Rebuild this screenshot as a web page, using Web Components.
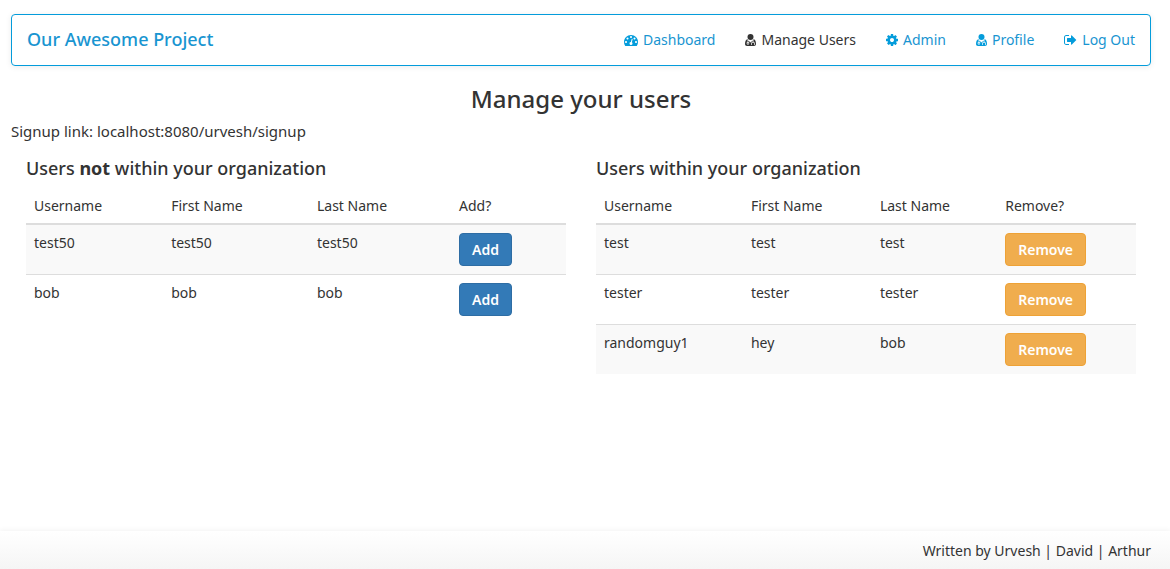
<!DOCTYPE html>
<html lang="en">
<head>
<meta charset="utf-8">
<meta name="viewport" content="width=device-width, initial-scale=1">
<title>Manage your users</title>
<style>
  body { margin: 0; font: 14px/20px "Noto Sans", "Open Sans", sans-serif; color: #333; background: #fff; }
</style>
</head>
<body>
<app-page>
  <nav-bar slot="header" brand="Our Awesome Project">
    <nav-item icon="dashboard" label="Dashboard"></nav-item>
    <nav-item icon="user" label="Manage Users" current></nav-item>
    <nav-item icon="cog" label="Admin"></nav-item>
    <nav-item icon="user" label="Profile"></nav-item>
    <nav-item icon="signout" label="Log Out"></nav-item>
  </nav-bar>
  <span slot="title">Manage your users</span>
  <span slot="signup">Signup link: localhost:8080/urvesh/signup</span>
  <user-table kind="add"><span>Users <b>not</b> within your organization</span></user-table>
  <user-table kind="remove"><span>Users within your organization</span></user-table>
  <page-footer slot="footer">Written by Urvesh | David | Arthur</page-footer>
</app-page>

<script>
const ICONS = {
  dashboard: [14, '0 0 1792 1792', '<path d="M384 1152q0-53-37.500-90.500t-90.500-37.500-90.500 37.500-37.500 90.500 37.500 90.500 90.500 37.500 90.500-37.500 37.500-90.500zm192-448q0-53-37.500-90.500t-90.500-37.500-90.500 37.500-37.500 90.500 37.500 90.500 90.500 37.500 90.500-37.500 37.500-90.500zm428 481l101-382q6-26-7.500-48.500t-38.500-29.500-48 6.500-30 39.500l-101 382q-60 5-107 43.500t-63 98.500q-20 77 20 146t117 89 146-20 89-117q16-60-6-117t-72-91zm660-33q0-53-37.500-90.500t-90.500-37.500-90.500 37.500-37.500 90.500 37.500 90.500 90.500 37.500 90.500-37.500 37.500-90.500zm-640-640q0-53-37.500-90.500t-90.500-37.500-90.500 37.500-37.500 90.500 37.500 90.500 90.500 37.500 90.500-37.500 37.500-90.500zm448 192q0-53-37.500-90.500t-90.500-37.500-90.500 37.500-37.500 90.500 37.500 90.500 90.500 37.500 90.500-37.500 37.500-90.500zm320 448q0 261-141 483-19 29-54 29h-1402q-35 0-54-29-141-221-141-483 0-182 71-348t191-286 286-191 348-71 348 71 286 191 191 286 71 348z"/>'],
  cog: [12, '128 0 1536 1792', '<path d="M1152 896q0-106-75-181t-181-75-181 75-75 181 75 181 181 75 181-75 75-181zm512-109v222q0 12-8 23t-20 13l-185 28q-19 54-39 91 35 50 107 138 10 12 10 25t-9 23q-27 37-99 108t-94 71q-12 0-26-9l-138-108q-44 23-91 38-16 136-29 186-7 28-36 28h-222q-14 0-24.500-8.500t-11.500-21.500l-28-184q-49-16-90-37l-141 107q-10 9-25 9-14 0-25-11-126-114-165-168-7-10-7-23 0-12 8-23 15-21 51-66.500t54-70.500q-27-50-41-99l-183-27q-13-2-21-12.500t-8-23.500v-222q0-12 8-23t19-13l186-28q14-46 39-92-40-57-107-138-10-12-10-24 0-10 9-23 26-36 98.500-107.500t94.500-71.500q13 0 26 10l138 107q44-23 91-38 16-136 29-186 7-28 36-28h222q14 0 24.500 8.500t11.500 21.500l28 184q49 16 90 37l142-107q9-9 24-9 13 0 25 10 129 119 165 170 7 8 7 22 0 12-8 23-15 21-51 66.500t-54 70.500q26 50 41 98l183 28q13 2 21 12.500t8 23.500z"/>'],
  signout: [13, '64 0 1664 1792', '<path d="M704 1440q0 4 1 20t.5 26.500-3 23.500-10 19.500-20.500 6.500h-320q-119 0-203.500-84.500t-84.500-203.500v-704q0-119 84.500-203.500t203.500-84.500h320q13 0 22.500 9.500t9.500 22.500q0 4 1 20t.5 26.500-3 23.500-10 19.500-20.500 6.500h-320q-66 0-113 47t-47 113v704q0 66 47 113t113 47h312l11.500 1 11.500 3 8 5.500 7 9 2 13.500zm928-544q0 26-19 45l-544 544q-19 19-45 19t-45-19-19-45v-288h-448q-26 0-45-19t-19-45v-384q0-26 19-45t45-19h448v-288q0-26 19-45t45-19 45 19l544 544q19 19 19 45z"/>'],
  user: [11, '0 0 11 14', '<circle cx="5.500" cy="4" r="3"/><path fill-rule="evenodd" d="M3 6.200 2.600 7v2.100a1.300 1.300 0 1 0 .7 0V7.600L5.500 9.500l2.200-1.900v1.200a1.700 1.700 0 0 0-1.500 1.700V12h.7v-1.500a1.100 1.100 0 0 1 2.200 0V12h.7v-1.500a1.700 1.700 0 0 0-1.400-1.700V6.200C10 6.200 11 8 11 11c0 1.300-.8 2-2 2H2c-1.200 0-2-.7-2-2 0-3 1-4.800 3-4.800z"/><circle cx="3" cy="10.300" r=".6"/>']
};

class AppPage extends HTMLElement {
  constructor() {
    super();
    this.attachShadow({ mode: 'open' }).innerHTML = `
      <style>
        :host { display: flex; flex-direction: column; min-height: 100vh; box-sizing: border-box; }
        .body { flex: 1; padding: 14px 19px 0 11px; }
        h1 { margin: 19px 0 9px; font-size: 24px; line-height: 27px; font-weight: 500; text-align: center; }
        p { margin: 0 0 17px; font-size: 15px; line-height: 20px; }
        .columns { display: grid; grid-template-columns: 1fr 1fr; gap: 30px; padding: 0 15px; align-items: start; }
      </style>
      <div class="body">
        <slot name="header"></slot>
        <main>
          <h1><slot name="title"></slot></h1>
          <p><slot name="signup"></slot></p>
          <div class="columns"><slot></slot></div>
        </main>
      </div>
      <slot name="footer"></slot>`;
  }
}

class NavBar extends HTMLElement {
  constructor() {
    super();
    this.attachShadow({ mode: 'open' }).innerHTML = `
      <style>
        :host { display: block; }
        header { display: flex; align-items: center; justify-content: space-between; min-height: 50px; padding: 0 15px;
          border: 1px solid #049cdb; border-radius: 4px; box-shadow: 0 1px 6px rgba(0,0,0,.08); }
        .brand { padding-bottom: 2px; color: #1995d1; font-size: 18px; line-height: 20px; font-weight: 500; text-decoration: none; }
        nav { display: flex; gap: 30px; }
      </style>
      <header><a class="brand" href="#"></a><nav><slot></slot></nav></header>`;
    this.shadowRoot.querySelector('.brand').textContent = this.getAttribute('brand');
  }
}

class NavItem extends HTMLElement {
  constructor() {
    super();
    const [width, box, shapes] = ICONS[this.getAttribute('icon')];
    this.attachShadow({ mode: 'open' }).innerHTML = `
      <style>
        :host { display: block; }
        a { display: flex; align-items: center; gap: 5px; color: #1995d1; text-decoration: none; white-space: nowrap; }
        svg { fill: #049cdb; height: 14px; flex: none; }
        :host([current]) a { color: #333; }
        :host([current]) svg { fill: #333; }
      </style>
      <a href="#"><svg width="${width}" viewBox="${box}" aria-hidden="true">${shapes}</svg><span></span></a>`;
    this.shadowRoot.querySelector('span').textContent = this.getAttribute('label');
    if (this.hasAttribute('current')) this.shadowRoot.querySelector('a').setAttribute('aria-current', 'page');
  }
}

const USERS = {
  add: [['test50', 'test50', 'test50'], ['bob', 'bob', 'bob']],
  remove: [['test', 'test', 'test'], ['tester', 'tester', 'tester'], ['randomguy1', 'hey', 'bob']]
};
const COLUMNS = { add: [25.4, 27, 26.3], remove: [27.2, 23.9, 23.2] };

class UserTable extends HTMLElement {
  constructor() {
    super();
    const kind = this.getAttribute('kind');
    const action = kind === 'add' ? 'Add' : 'Remove';
    const cols = COLUMNS[kind].map(w => `<col style="width:${w}%">`).join('') + '<col>';
    const rows = USERS[kind].map(user =>
      `<tr>${user.map(t => `<td>${t}</td>`).join('')}<td><button type="button" class="${kind}">${action}</button></td></tr>`).join('');
    this.attachShadow({ mode: 'open' }).innerHTML = `
      <style>
        :host { display: block; min-width: 0; }
        h2 { margin: 0 0 9px; font-size: 18px; line-height: 20px; font-weight: 500; }
        table { width: 100%; table-layout: fixed; border-spacing: 0; }
        th, td { padding: 8px; text-align: left; vertical-align: top; font-weight: 400; }
        th { padding: 9px 8px 7px; border-bottom: 2px solid #ddd; }
        tr + tr td { border-top: 1px solid #ddd; }
        tbody tr:nth-child(odd) td { background: #f9f9f9; }
        button { display: block; padding: 6px 12px; border: 1px solid; border-radius: 4px; color: #fff;
          font: 600 14px/19px "Noto Sans", "Open Sans", sans-serif; cursor: pointer; }
        .add { background: #337ab7; border-color: #2e6da4; }
        .remove { background: #f0ad4e; border-color: #eea236; }
      </style>
      <h2><slot></slot></h2>
      <table>
        <colgroup>${cols}</colgroup>
        <thead><tr><th>Username</th><th>First Name</th><th>Last Name</th><th>${action}?</th></tr></thead>
        <tbody>${rows}</tbody>
      </table>`;
  }
}

class PageFooter extends HTMLElement {
  constructor() {
    super();
    this.attachShadow({ mode: 'open' }).innerHTML = `
      <style>
        :host { display: block; }
        footer { padding: 10px 19px 8px; text-align: right; background: linear-gradient(#fff, #f5f5f5);
          box-shadow: 0 0 6px rgba(0,0,0,.07); }
      </style>
      <footer><slot></slot></footer>`;
  }
}

customElements.define('app-page', AppPage);
customElements.define('nav-bar', NavBar);
customElements.define('nav-item', NavItem);
customElements.define('user-table', UserTable);
customElements.define('page-footer', PageFooter);
</script>
</body>
</html>
